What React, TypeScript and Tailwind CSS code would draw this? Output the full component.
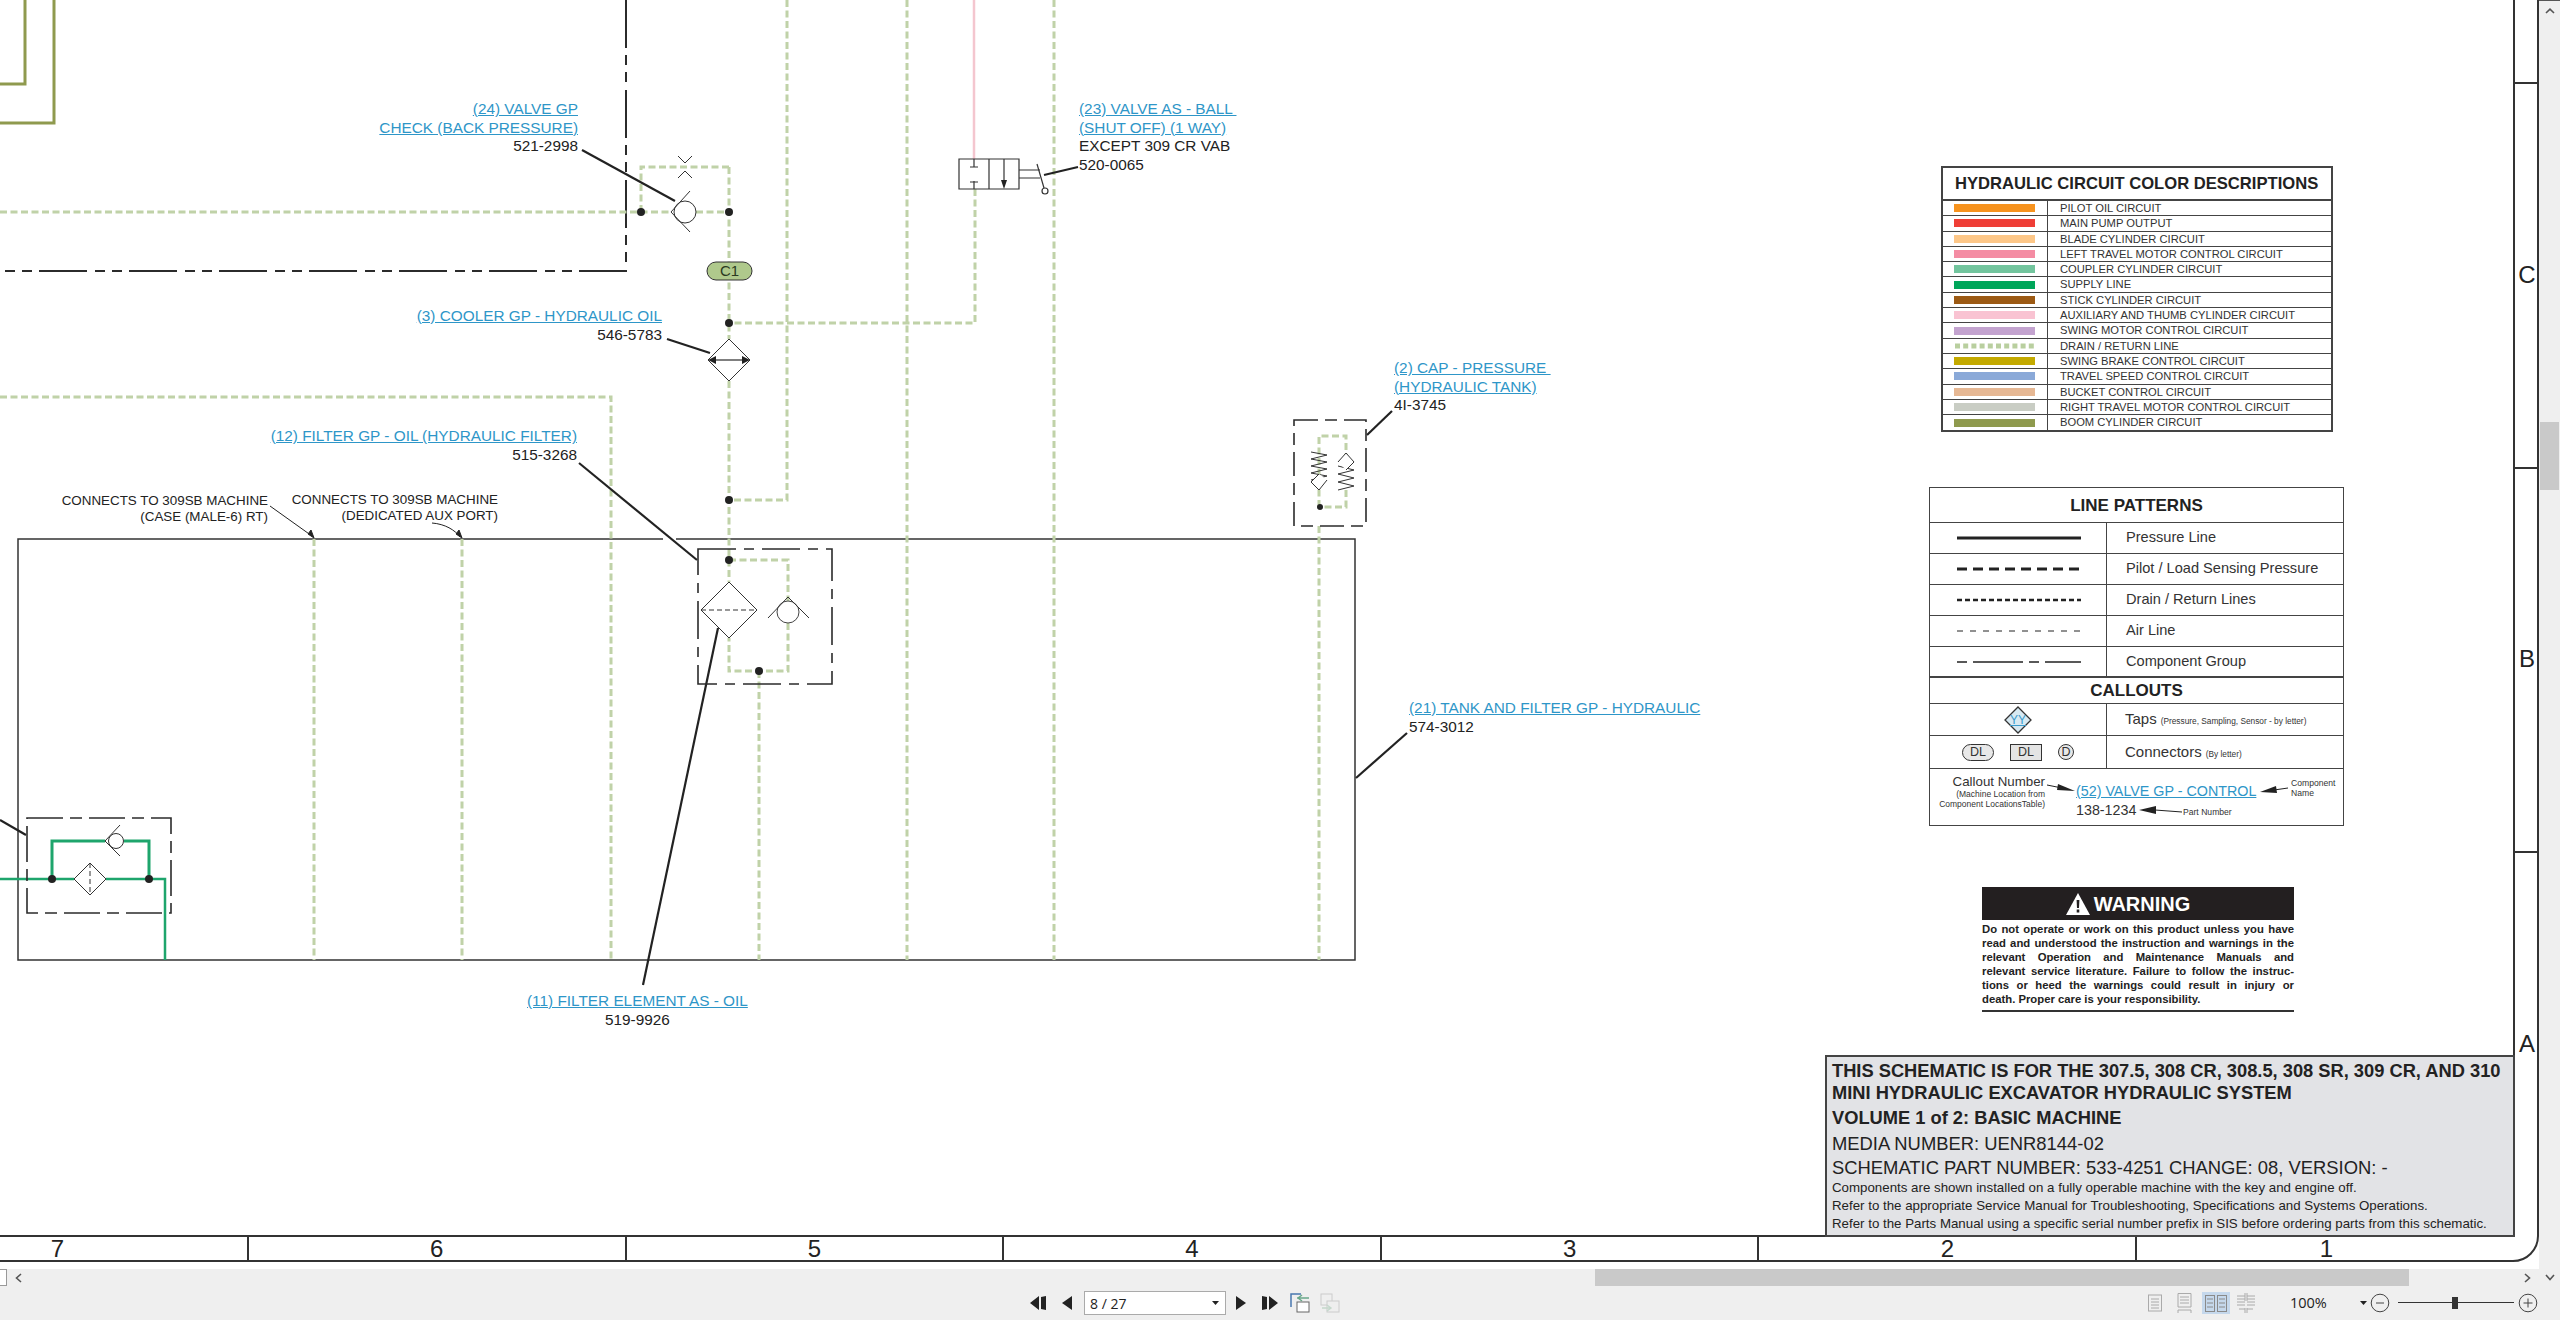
import React from "react";

const DRAIN = "#c0d2a8";
const INK = "#2b2b2b";

function Schematic() {
  const drain = [
    "M787 0V500H729",
    "M907 0V960",
    "M1054 0V960",
    "M0 397H611V960",
    "M729 167V339",
    "M729 381V582",
    "M729 167H641V212",
    "M0 212H671",
    "M696 212H729",
    "M975 189V323H729",
    "M314 539V960",
    "M462 539V960",
    "M729 560H788V601",
    "M788 623V671H729V638",
    "M759 671V960",
    "M1319 526V960",
    "M1319 507V436H1346V462",
    "M1346 490V507H1319",
  ];
  return (
    <svg className="absolute inset-0" width="2539" height="1269" viewBox="0 0 2539 1269" fill="none">
      {/* olive boom lines */}
      <path d="M25 0V84H0M54 0V123H0" stroke="#8f9a4e" strokeWidth="3" />
      {/* pink pilot */}
      <path d="M974 0V159" stroke="#f4c6cf" strokeWidth="2.5" />
      {/* component group */}
      <path d="M626 0V271H0" stroke={INK} strokeWidth="2" strokeDasharray="48 7 10 7 10 8" />
      {/* tank box */}
      <path d="M18 539H1355V960H18Z" stroke="#333" strokeWidth="1.5" />
      {drain.map((d) => (
        <path key={d} d={d} stroke={DRAIN} strokeWidth="3" strokeDasharray="7 3.5" />
      ))}
      {/* green supply */}
      <path d="M0 879H74M106 879H165V960" stroke="#1ea56c" strokeWidth="2.5" />
      <path d="M52 879V841H105M124 841H149V879" stroke="#1ea56c" strokeWidth="3" />
      {/* halo */}
      <path d="M663 539H676" stroke="#fff" strokeWidth="3" />

      {/* frame */}
      <path d="M2514 0V1236H0M2538 0V1236A25 25 0 0 1 2513 1261H0" stroke="#333" strokeWidth="2" />
      <path d="M2514 83H2538M2514 468H2538M2514 852H2538" stroke="#333" strokeWidth="2" />

      {/* leaders */}
      <g stroke="#222" strokeWidth="2.2">
        <path d="M582 150L675 201" />
        <path d="M667 339L710 353" />
        <path d="M579 463L697 560" />
        <path d="M718 628L643 985" />
        <path d="M1044 175L1078 167" />
        <path d="M1367 435L1392 411" />
        <path d="M1356 778L1407 733" />
        <path d="M0 820L26 835" />
      </g>
      <path d="M270 506L312 536" stroke="#222" />
      <path d="M432 523C445 524 455 530 460 537" stroke="#222" />
      <path d="M314 538L308 534L311 530Z" fill="#222" stroke="#222" />
      <path d="M462 538L456 534L459 530Z" fill="#222" stroke="#222" />

      {/* check valve 24 */}
      <g stroke="#333" strokeWidth="1">
        <circle cx="685" cy="212" r="11" fill="#fff" />
        <path d="M690 191L671 212L690 232" />
        <path d="M678 156L685 163L692 156M678 178L685 171L692 178" />
      </g>
      <g fill="#222">
        <circle cx="641" cy="212" r="4" />
        <circle cx="729" cy="212" r="4" />
        <circle cx="729" cy="323" r="4" />
        <circle cx="729" cy="500" r="4" />
        <circle cx="729" cy="560" r="4" />
        <circle cx="759" cy="671" r="4" />
        <circle cx="1320" cy="507" r="3" />
        <circle cx="52" cy="879" r="4" />
        <circle cx="149" cy="879" r="4" />
      </g>

      {/* C1 pill */}
      <rect x="707" y="262" width="45" height="18" rx="9" fill="#afc98c" stroke="#333" />

      {/* cooler */}
      <path d="M729 339L750 360L729 381L708 360Z" stroke="#333" strokeWidth="1" />
      <path d="M714 360H744" stroke="#555" strokeWidth="1.5" />
      <path d="M708 360L716 356V364ZM750 360L742 356V364Z" fill="#222" />

      {/* ball valve */}
      <g stroke="#333" strokeWidth="1.2">
        <path d="M959 159H1019V189H959ZM989 159V189" />
        <path d="M974 159V167M970 167H978M974 189V181M970 182H978" />
        <path d="M1004 159V182" />
        <path d="M1019 170H1040M1019 178H1040" />
        <path d="M1037 164L1044 188" />
        <circle cx="1045" cy="191" r="3" fill="#fff" />
      </g>
      <path d="M1001 180H1007L1004 189Z" fill="#222" />

      {/* filter group 12 */}
      <path d="M698 549H832V684H698Z" stroke={INK} strokeWidth="1.6" strokeDasharray="38 8 10 8" />
      <path d="M729 582L757 610L729 638L701 610Z" stroke="#333" strokeWidth="1" fill="#fff" />
      <path d="M701 610H757" stroke="#333" strokeDasharray="5 3" />
      <circle cx="788" cy="612" r="11" stroke="#444" fill="#fff" />
      <path d="M768 618L788 597L809 618" stroke="#333" />

      {/* cap group */}
      <path d="M1294 420H1366V526H1294Z" stroke={INK} strokeWidth="1.6" strokeDasharray="24 7 12 7" />
      <g stroke="#333" strokeWidth="1">
        <path d="M1311 452L1327 455L1311 459L1327 462L1311 466L1327 469L1311 473L1327 476L1311 480" />
        <path d="M1327 480L1319 490L1311 482L1319 474" fill="#fff" />
        <path d="M1338 490L1354 486L1338 482L1354 478L1338 474L1354 470L1338 466" />
        <path d="M1338 462L1346 453L1354 462L1346 470" fill="#fff" />
      </g>

      {/* left filter */}
      <path d="M27 818H171V913H27Z" stroke={INK} strokeWidth="1.6" strokeDasharray="36 7 12 7" />
      <g stroke="#333" strokeWidth="1">
        <path d="M90 863L106 879L90 895L74 879Z" />
        <path d="M90 863V895" strokeDasharray="5 3" />
        <circle cx="116" cy="841" r="7.5" fill="#fff" />
        <path d="M120 825L105 841L120 856" />
      </g>
    </svg>
  );
}

const colours = [
  { bg: "bg-[#f7931e]", label: "PILOT OIL CIRCUIT" },
  { bg: "bg-[#ef3e36]", label: "MAIN PUMP OUTPUT" },
  { bg: "bg-[#fdc788]", label: "BLADE CYLINDER CIRCUIT" },
  { bg: "bg-[#f48ca3]", label: "LEFT TRAVEL MOTOR CONTROL CIRCUIT" },
  { bg: "bg-[#73c59e]", label: "COUPLER CYLINDER CIRCUIT" },
  { bg: "bg-[#00a65a]", label: "SUPPLY LINE" },
  { bg: "bg-[#9c5a14]", label: "STICK CYLINDER CIRCUIT" },
  { bg: "bg-[#f9c3d2]", label: "AUXILIARY AND THUMB CYLINDER CIRCUIT" },
  { bg: "bg-[#c3a3cf]", label: "SWING MOTOR CONTROL CIRCUIT" },
  { bg: "", label: "DRAIN / RETURN LINE" },
  { bg: "bg-[#c4aa00]", label: "SWING BRAKE CONTROL CIRCUIT" },
  { bg: "bg-[#8aa9d8]", label: "TRAVEL SPEED CONTROL CIRCUIT" },
  { bg: "bg-[#e6b894]", label: "BUCKET CONTROL CIRCUIT" },
  { bg: "bg-[#c9cdc4]", label: "RIGHT TRAVEL MOTOR CONTROL CIRCUIT" },
  { bg: "bg-[#8f9a4e]", label: "BOOM CYLINDER CIRCUIT" },
];

function ColorTable() {
  return (
    <div className="absolute left-[1941px] top-[166px] w-[392px] border-2 border-[#444] bg-white">
      <div className="h-[33px] border-b-2 border-[#444] pl-[12px] text-[16.6px] leading-[32px] font-bold text-[#222] whitespace-nowrap">
        HYDRAULIC CIRCUIT COLOR DESCRIPTIONS
      </div>
      {colours.map((c, i) => (
        <div key={c.label} className={"flex h-[15.3px] " + (i < 14 ? "border-b border-[#444]" : "")}>
          <div className="w-[105px] shrink-0 border-r border-[#444] flex items-center pl-[11px]">
            {c.bg ? (
              <div className={"w-[81px] h-[8px] " + c.bg} />
            ) : (
              <svg width="81" height="6">
                <path d="M1 3H81" stroke="#b9cf9f" strokeWidth="5" strokeDasharray="5 3.2" />
              </svg>
            )}
          </div>
          <div className="pl-[12px] text-[11.2px] leading-[14px] text-[#333] whitespace-nowrap">{c.label}</div>
        </div>
      ))}
    </div>
  );
}

function LineRow({ label, children, h }: { label: string; children: React.ReactNode; h: string }) {
  return (
    <div className={"flex border-b border-[#444] " + h}>
      <div className="w-[177px] shrink-0 border-r border-[#444] flex items-center pl-[27px]">{children}</div>
      <div className="pl-[19px] flex items-center text-[14.6px] text-[#333] whitespace-nowrap">{label}</div>
    </div>
  );
}

function Sample({ w, dash }: { w: number; dash?: string }) {
  return (
    <svg width="124" height="6">
      <path d="M0 3H124" stroke="#222" strokeWidth={w} strokeDasharray={dash} />
    </svg>
  );
}

function PatternTable() {
  return (
    <div className="absolute left-[1929px] top-[487px] w-[415px] h-[339px] border border-[#444] bg-white">
      <div className="h-[35px] border-b border-[#444] text-center text-[17px] font-bold leading-[36px] text-[#222]">LINE PATTERNS</div>
      <LineRow h="h-[31px]" label="Pressure Line"><Sample w={3} /></LineRow>
      <LineRow h="h-[31px]" label="Pilot / Load Sensing Pressure"><Sample w={3} dash="10 6" /></LineRow>
      <LineRow h="h-[31px]" label="Drain / Return Lines"><Sample w={2.5} dash="5 3" /></LineRow>
      <LineRow h="h-[31px]" label="Air Line"><Sample w={1} dash="6 7" /></LineRow>
      <LineRow h="h-[30px]" label="Component Group"><Sample w={1.6} dash="10 6 50 6" /></LineRow>
      <div className="h-[27px] border-y border-[#444] text-center text-[17px] font-bold leading-[26px] text-[#222]">CALLOUTS</div>
      <div className="flex h-[32px] border-b border-[#444]">
        <div className="w-[177px] shrink-0 border-r border-[#444] flex items-center justify-center relative">
          <svg width="30" height="30" viewBox="0 0 30 30">
            <path d="M15 2L28 15L15 28L2 15Z" fill="#d7e9f2" stroke="#333" strokeWidth="1.3" />
          </svg>
          <span className="absolute text-[12px] text-[#3a9acb] underline">YY</span>
        </div>
        <div className="pl-[18px] flex items-center gap-[4px] text-[#333] whitespace-nowrap">
          <span className="text-[15px]">Taps</span>
          <span className="text-[8.3px] mt-[4px]">(Pressure, Sampling, Sensor - by letter)</span>
        </div>
      </div>
      <div className="flex h-[33px] border-b border-[#444]">
        <div className="w-[177px] shrink-0 border-r border-[#444] flex items-center pl-[32px] text-[12.5px] text-[#333]">
          <div className="w-[32px] h-[17px] rounded-full border border-[#333] bg-[#e8e8e8] text-center leading-[15px]">DL</div>
          <div className="ml-[16px] w-[32px] h-[17px] border border-[#333] bg-[#e4e4e4] text-center leading-[15px]">DL</div>
          <div className="ml-[16px] w-[16px] h-[16px] rounded-full border border-[#333] bg-[#e8e8e8] text-center leading-[14px]">D</div>
        </div>
        <div className="pl-[18px] flex items-center gap-[4px] text-[#333] whitespace-nowrap">
          <span className="text-[15px]">Connectors</span>
          <span className="text-[8.3px] mt-[4px]">(By letter)</span>
        </div>
      </div>
      <CalloutKey />
    </div>
  );
}

function CalloutKey() {
  return (
    <div className="relative h-[57px] text-[#333]">
      <svg className="absolute inset-0" width="413" height="57" fill="none">
        <path d="M117 16L132 19" stroke="#222" />
        <path d="M145 22L128 15L127 21Z" fill="#222" />
        <path d="M358 19L344 21" stroke="#222" />
        <path d="M330 23L346 17L347 24Z" fill="#222" />
        <path d="M225 41L252 43" stroke="#222" />
        <path d="M209 41L226 37L226 45Z" fill="#222" />
      </svg>
      <div className="absolute right-[298px] top-[5px] text-[13.3px] leading-[15px] whitespace-nowrap">Callout Number</div>
      <div className="absolute right-[298px] top-[20px] text-[8.5px] leading-[10px] text-right whitespace-nowrap">
        (Machine Location from
        <br />
        Component LocationsTable)
      </div>
      <div className="absolute left-[146px] top-[14px] text-[14.3px] leading-[16px] text-[#2e96c8] underline whitespace-nowrap">(52) VALVE GP - CONTROL</div>
      <div className="absolute left-[146px] top-[33px] text-[14.3px] leading-[16px] whitespace-nowrap">138-1234</div>
      <div className="absolute left-[361px] top-[9px] text-[8.6px] leading-[10px] whitespace-nowrap">
        Component
        <br />
        Name
      </div>
      <div className="absolute left-[253px] top-[38px] text-[8.6px] leading-[10px] whitespace-nowrap">Part Number</div>
    </div>
  );
}

const warningLines = [
  "Do not operate or work on this product unless you have",
  "read and understood the instruction and warnings in the",
  "relevant Operation and Maintenance Manuals and",
  "relevant service literature. Failure to follow the instruc-",
  "tions or heed the warnings could result in injury or",
];

function WarningBox() {
  return (
    <div className="absolute left-[1982px] top-[887px] w-[312px] border-b-2 border-[#333] pb-[4px] bg-white">
      <div className="h-[33px] bg-[#231f20] flex items-center justify-center gap-[4px] pr-[20px] text-white text-[20px] font-bold">
        <svg width="24" height="22" viewBox="0 0 24 22">
          <path d="M12 0L24 22H0Z" fill="#fff" />
          <path d="M10.6 7H13.4L13 15H11ZM10.7 16.5H13.3V19.5H10.7Z" fill="#231f20" />
        </svg>
        <span>WARNING</span>
      </div>
      <div className="text-[11.3px] leading-[14px] font-bold text-[#222] pt-[2px]">
        {warningLines.map((l) => (
          <div key={l} className="text-justify [text-align-last:justify]">{l}</div>
        ))}
        <div>death. Proper care is your responsibility.</div>
      </div>
    </div>
  );
}

function TitleBlock() {
  return (
    <div className="absolute left-[1825px] top-[1055px] w-[690px] h-[182px] border-2 border-[#444] bg-[#e2e3e6] pl-[5px] text-[#222] whitespace-nowrap">
      <div className="text-[18.3px] font-bold leading-[22px] mt-[3px]">THIS SCHEMATIC IS FOR THE 307.5, 308 CR, 308.5, 308 SR, 309 CR, AND 310</div>
      <div className="text-[18.3px] font-bold leading-[22px]">MINI HYDRAULIC EXCAVATOR HYDRAULIC SYSTEM</div>
      <div className="text-[18.3px] font-bold leading-[24px] mt-[2px]">VOLUME 1 of 2: BASIC MACHINE</div>
      <div className="text-[18.4px] leading-[24px] mt-[2px]">MEDIA NUMBER: UENR8144-02</div>
      <div className="text-[18.4px] leading-[24px]">SCHEMATIC PART NUMBER: 533-4251 CHANGE: 08, VERSION: -</div>
      <div className="text-[13.3px] leading-[18px] mt-[-1px]">Components are shown installed on a fully operable machine with the key and engine off.</div>
      <div className="text-[13.3px] leading-[18px]">Refer to the appropriate Service Manual for Troubleshooting, Specifications and Systems Operations.</div>
      <div className="text-[13.3px] leading-[18px]">Refer to the Parts Manual using a specific serial number prefix in SIS before ordering parts from this schematic.</div>
    </div>
  );
}

function Ruler() {
  const cells = [
    { n: "7", w: "w-[381px] -ml-[132px]" },
    { n: "6", w: "w-[377.6px]" },
    { n: "5", w: "w-[377.6px]" },
    { n: "4", w: "w-[377.6px]" },
    { n: "3", w: "w-[377.6px]" },
    { n: "2", w: "w-[378px]" },
  ];
  return (
    <div className="absolute left-0 top-[1237px] h-[23px] w-[2514px] flex text-[24px] leading-[24px] text-[#222]">
      {cells.map((c) => (
        <div key={c.n} className={"shrink-0 border-r-2 border-[#333] text-center " + c.w}>{c.n}</div>
      ))}
      <div className="w-[378px] shrink-0 text-center">1</div>
    </div>
  );
}

function Labels() {
  const link = "text-[#2e96c8] underline";
  return (
    <div className="text-[15.35px] leading-[18.6px] text-[#222] whitespace-pre">
      <div className="absolute right-[1961px] top-[100px] text-right">
        <div className={link}>(24) VALVE GP</div>
        <div className={link}>CHECK (BACK PRESSURE)</div>
        <div>521-2998</div>
      </div>
      <div className="absolute left-[1079px] top-[100px]">
        <div className={link}>{"(23) VALVE AS - BALL "}</div>
        <div className={link}>{"(SHUT OFF) (1 WAY)"}</div>
        <div>EXCEPT 309 CR VAB</div>
        <div>520-0065</div>
      </div>
      <div className="absolute right-[1877px] top-[307px] text-right">
        <div className={link}>(3) COOLER GP - HYDRAULIC OIL</div>
        <div>546-5783</div>
      </div>
      <div className="absolute right-[1962px] top-[427px] text-right">
        <div className={link}>(12) FILTER GP - OIL (HYDRAULIC FILTER)</div>
        <div>515-3268</div>
      </div>
      <div className="absolute left-[1394px] top-[359px]">
        <div className={link}>{"(2) CAP - PRESSURE "}</div>
        <div className={link}>(HYDRAULIC TANK)</div>
        <div>4I-3745</div>
      </div>
      <div className="absolute left-[1409px] top-[699px]">
        <div className={link}>(21) TANK AND FILTER GP - HYDRAULIC</div>
        <div>574-3012</div>
      </div>
      <div className="absolute left-[527px] top-[992px] text-center">
        <div className={link}>(11) FILTER ELEMENT AS - OIL</div>
        <div>519-9926</div>
      </div>
      <div className="absolute right-[2271px] top-[493px] text-right text-[13.4px] leading-[16px]">
        <div>CONNECTS TO 309SB MACHINE</div>
        <div>(CASE (MALE-6) RT)</div>
      </div>
      <div className="absolute right-[2041px] top-[492px] text-right text-[13.4px] leading-[16px]">
        <div>CONNECTS TO 309SB MACHINE</div>
        <div>(DEDICATED AUX PORT)</div>
      </div>
      <div className="absolute left-[707px] top-[262px] w-[45px] h-[18px] text-center text-[15px] leading-[18px] text-[#2a3a20]">C1</div>
    </div>
  );
}

function PageCanvas() {
  return (
    <div className="relative flex-1 overflow-hidden bg-white">
      <Schematic />
      <Labels />
      <ColorTable />
      <PatternTable />
      <WarningBox />
      <TitleBlock />
      <Ruler />
      <div className="absolute left-[2515px] top-[258px] w-[24px] text-center text-[24px] leading-[34px] text-[#222]">C</div>
      <div className="absolute left-[2515px] top-[642px] w-[24px] text-center text-[24px] leading-[34px] text-[#222]">B</div>
      <div className="absolute left-[2515px] top-[1027px] w-[24px] text-center text-[24px] leading-[34px] text-[#222]">A</div>
    </div>
  );
}

function VScroll() {
  return (
    <div className="w-[21px] shrink-0 bg-[#efefef] border-t border-[#555] flex flex-col items-center">
      <svg className="mt-[7px]" width="10" height="6" viewBox="0 0 10 6" fill="none">
        <path d="M1 5L5 1.2L9 5" stroke="#555" strokeWidth="1.6" />
      </svg>
      <div className="mt-[408px] w-[19px] h-[68px] bg-[#c9c9c9]" />
    </div>
  );
}

function HScroll() {
  return (
    <div className="h-[17px] shrink-0 bg-[#efefef] flex items-center">
      <div className="w-[7px] h-[17px] border border-l-0 border-[#999] bg-white shrink-0" />
      <svg className="ml-[8px] shrink-0" width="7" height="10" viewBox="0 0 7 10" fill="none">
        <path d="M6 1L1.5 5L6 9" stroke="#555" strokeWidth="1.6" />
      </svg>
      <div className="ml-[1573px] w-[814px] h-[17px] bg-[#c9c9c9] shrink-0" />
      <svg className="ml-[115px] shrink-0" width="7" height="10" viewBox="0 0 7 10" fill="none">
        <path d="M1 1L5.5 5L1 9" stroke="#555" strokeWidth="1.6" />
      </svg>
      <svg className="ml-[14px] shrink-0" width="10" height="7" viewBox="0 0 10 7" fill="none">
        <path d="M1 1L5 5.5L9 1" stroke="#555" strokeWidth="1.6" />
      </svg>
    </div>
  );
}

function Toolbar() {
  return (
    <div className="h-[34px] shrink-0 bg-[#efefef] flex items-center text-[#222] font-['Open_Sans',sans-serif]">
      <svg className="ml-[1030px] shrink-0" width="16" height="16" viewBox="0 0 16 16"><path d="M0 8L9 1V15ZM11 2L16 1V15L11 14Z" fill="#222" /></svg>
      <svg className="ml-[16px] shrink-0" width="10" height="16" viewBox="0 0 10 16"><path d="M0 8L10 1V15Z" fill="#222" /></svg>
      <div className="ml-[12px] w-[142px] h-[24px] shrink-0 bg-white border border-[#aaa] flex items-center pl-[5px] pr-[6px] justify-between text-[14px]">
        <span>8 / 27</span>
        <svg width="7" height="4" viewBox="0 0 7 4"><path d="M0 0H7L3.5 4Z" fill="#222" /></svg>
      </div>
      <svg className="ml-[10px] shrink-0" width="10" height="16" viewBox="0 0 10 16"><path d="M10 8L0 1V15Z" fill="#222" /></svg>
      <svg className="ml-[16px] shrink-0" width="16" height="16" viewBox="0 0 16 16"><path d="M16 8L7 1V15ZM5 2L0 1V15L5 14Z" fill="#222" /></svg>
      <svg className="ml-[12px] shrink-0" width="20" height="20" viewBox="0 0 20 20" fill="none">
        <path d="M1 14V1H11" stroke="#4a78b0" strokeWidth="1.5" />
        <rect x="7" y="9" width="12" height="10" fill="#fff" stroke="#666" />
        <path d="M7 5H19M8 5L12 2M8 5L12 8" stroke="#6aa88a" strokeWidth="1.5" />
      </svg>
      <svg className="ml-[10px] shrink-0" width="20" height="20" viewBox="0 0 20 20" fill="none">
        <rect x="1" y="1" width="11" height="11" stroke="#ccc" />
        <rect x="7" y="8" width="12" height="11" fill="#eee" stroke="#ccc" />
        <path d="M2 15H11M7 12L11 15L7 18" stroke="#c5d8cc" strokeWidth="1.4" />
      </svg>
      <svg className="ml-[808px] shrink-0" width="14" height="18" viewBox="0 0 14 18" fill="none" stroke="#aaa">
        <rect x="0.5" y="1" width="13" height="16" />
        <path d="M3 5H11M3 8H11M3 11H11M3 14H11" />
      </svg>
      <svg className="ml-[15px] shrink-0" width="15" height="20" viewBox="0 0 15 20" fill="none" stroke="#aaa">
        <path d="M1 14V0.5H14V14ZM1 20V17H14V20M3 4H12M3 7H12M3 10H12" />
      </svg>
      <div className="ml-[10px] w-[28px] h-[22px] shrink-0 bg-[#c5d8ec] flex items-center justify-center">
        <svg width="22" height="17" viewBox="0 0 22 17" fill="none" stroke="#8a8a8a">
          <rect x="0.5" y="0.5" width="9" height="16" />
          <rect x="12.5" y="0.5" width="9" height="16" />
          <path d="M2 4H8M2 8H8M2 12H8M14 4H20M14 8H20M14 12H20" />
        </svg>
      </div>
      <svg className="ml-[6px] shrink-0" width="20" height="20" viewBox="0 0 20 20" fill="none" stroke="#aaa">
        <path d="M1 3H9M1 6H9M1 9H9M1 12H9M11 3H19M11 6H19M11 9H19M11 12H19M9 0V8M11 0V8M9 15V20M11 15V20M3 16H9M11 16H17" />
      </svg>
      <span className="ml-[34px] text-[14.5px] w-[39px] shrink-0">100%</span>
      <svg className="ml-[31px] shrink-0" width="7" height="4" viewBox="0 0 7 4"><path d="M0 0H7L3.5 4Z" fill="#222" /></svg>
      <svg className="ml-[3px] shrink-0" width="20" height="20" viewBox="0 0 20 20" fill="none" stroke="#444">
        <circle cx="10" cy="10" r="8.8" />
        <path d="M6 10H14" />
      </svg>
      <div className="ml-[8px] relative w-[116px] h-[12px] shrink-0">
        <div className="absolute left-0 right-0 top-[5px] h-[1px] bg-[#333]" />
        <div className="absolute left-[54px] top-0 w-[6px] h-[12px] bg-[#333]" />
      </div>
      <svg className="ml-[4px] shrink-0" width="20" height="20" viewBox="0 0 20 20" fill="none" stroke="#444">
        <circle cx="10" cy="10" r="8.8" />
        <path d="M5.5 10H14.5M10 5.5V14.5" />
      </svg>
    </div>
  );
}

export default function App() {
  return (
    <div className="w-[2560px] h-[1320px] flex flex-col overflow-hidden bg-[#efefef] font-['Liberation_Sans',Arial,sans-serif]">
      <div className="flex flex-1 min-h-0">
        <PageCanvas />
        <VScroll />
      </div>
      <HScroll />
      <Toolbar />
    </div>
  );
}
